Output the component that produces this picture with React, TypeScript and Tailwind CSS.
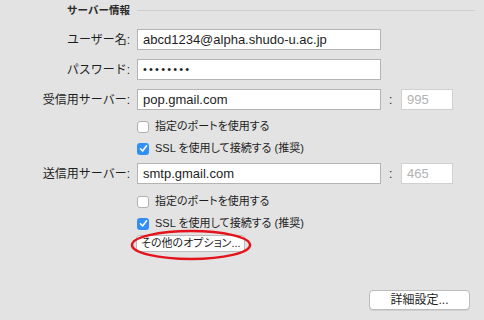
import React from "react";

const FONT = { fontFamily: '"Liberation Sans", "Noto Sans CJK JP", sans-serif' };

function Field({ value, width = "w-[244px]", muted = false, dots = false }: { value: string; width?: string; muted?: boolean; dots?: boolean }) {
  return (
    <div
      className={`${width} h-[21px] flex items-center px-[5px] bg-white border ${
        muted ? "border-[#d0d0d0] text-[#b3b3b3]" : "border-[#b4b4b4] text-[#1e1e1e]"
      } ${dots ? "text-[11px] tracking-[2.2px]" : "text-[13px]"} leading-none whitespace-nowrap`}
    >
      {value}
    </div>
  );
}

function Row({ label, children }: { label: string; children: React.ReactNode }) {
  return (
    <div className="flex items-center h-[21px]">
      <div className="w-[130px] text-right text-[12px] text-[#1e1e1e] leading-none">{label}</div>
      <div className="ml-[7px] flex items-center">{children}</div>
    </div>
  );
}

function Check({ checked, label }: { checked?: boolean; label: string }) {
  return (
    <div className="flex items-center pl-[137px] h-[13px]">
      {checked ? (
        <div className="w-[12px] h-[12px] rounded-[3px] bg-[#3190f7] flex items-center justify-center">
          <svg width="9" height="9" viewBox="0 0 9 9">
            <path d="M1.5 4.8 L3.6 7 L7.6 1.8" fill="none" stroke="white" strokeWidth="1.6" strokeLinecap="round" strokeLinejoin="round" />
          </svg>
        </div>
      ) : (
        <div className="w-[12px] h-[12px] rounded-[3px] bg-white border border-[#b0b0b0]" />
      )}
      <span className="ml-[6px] text-[11px] text-[#1e1e1e] leading-none whitespace-nowrap [font-feature-settings:'palt']">
        {label}
      </span>
    </div>
  );
}

function Port({ value }: { value: string }) {
  return (
    <>
      <span className="ml-[8px] w-[12px] text-[12px] text-[#1e1e1e] leading-none">:</span>
      <Field value={value} width="w-[52px]" muted />
    </>
  );
}

export default function App() {
  return (
    <div className="relative w-[484px] h-[320px] bg-[#e3e3e3] overflow-hidden" style={FONT}>
      {/* Header */}
      <div className="flex items-center h-[20px]">
        <div className="w-[130px] text-right text-[10.5px] font-bold text-[#2a2a2a] leading-none">サーバー情報</div>
        <div className="ml-[7px] w-[338px] h-px bg-[#cdcdcd]" />
      </div>

      <div className="mt-[9px] flex flex-col gap-[9px]">
        <Row label="ユーザー名:">
          <Field value="abcd1234@alpha.shudo-u.ac.jp" />
        </Row>
        <Row label="パスワード:">
          <Field value="••••••••" dots />
        </Row>
        <Row label="受信用サーバー:">
          <Field value="pop.gmail.com" />
          <Port value="995" />
        </Row>
      </div>

      <div className="mt-[10px] flex flex-col gap-[9px]">
        <Check label="指定のポートを使用する" />
        <Check checked label="SSL を使用して接続する (推奨)" />
      </div>

      <div className="mt-[8px]">
        <Row label="送信用サーバー:">
          <Field value="smtp.gmail.com" />
          <Port value="465" />
        </Row>
      </div>

      <div className="mt-[11px] flex flex-col gap-[9px]">
        <Check label="指定のポートを使用する" />
        <Check checked label="SSL を使用して接続する (推奨)" />
      </div>

      <div className="mt-[5px] pl-[136px] flex">
        <button className="w-[109px] h-[17px] bg-white border border-[#bdbdbd] rounded-[3px] text-[11px] text-[#1e1e1e] leading-none text-left pl-[4px] whitespace-nowrap [font-feature-settings:'palt']">
          その他のオプション...
        </button>
      </div>

      <div className="mt-[38px] flex justify-end pr-[14px]">
        <button className="w-[101px] h-[20px] bg-white border border-[#bcbcbc] rounded-[4px] text-[12px] text-[#1e1e1e] leading-none shadow-[0_1px_0_rgba(0,0,0,0.08)] whitespace-nowrap">
          詳細設定...
        </button>
      </div>

      {/* annotation */}
      <svg className="absolute left-[130px] top-[229px]" width="122" height="32" viewBox="0 0 122 32">
        <ellipse cx="61" cy="16" rx="59" ry="14" fill="none" stroke="#e3141b" strokeWidth="2.5" />
      </svg>
    </div>
  );
}
